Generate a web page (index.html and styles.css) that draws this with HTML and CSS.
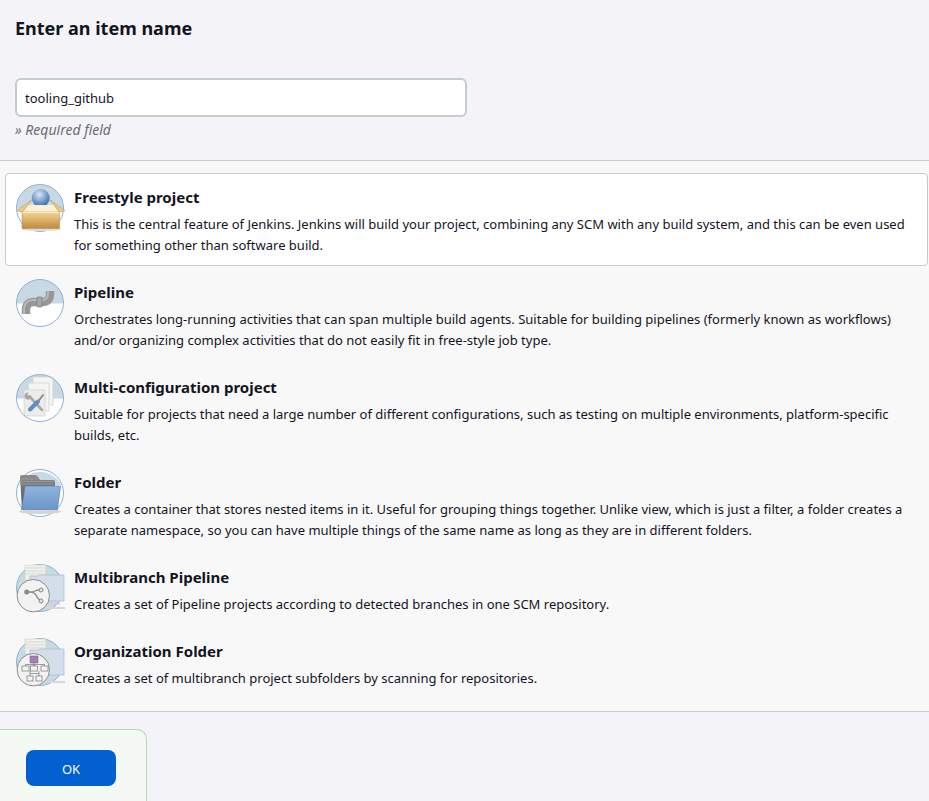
FILE: index.html
```
<!DOCTYPE html>
<html lang="en">
<head>
<meta charset="utf-8">
<title>New Item</title>
<link rel="stylesheet" href="styles.css">
</head>
<body>
<section class="name-section">
  <h2 class="section-title">Enter an item name</h2>
  <input class="name-input" type="text" value="tooling_github">
  <div class="hint">» Required field</div>
</section>
<ul class="item-list">
  <li class="item selected">
    <svg class="icon" viewBox="0 0 48 48">
      <defs>
        <clipPath id="c0"><circle cx="24" cy="24" r="23.5"/></clipPath>
        <radialGradient id="ball" cx=".42" cy=".3" r=".75"><stop offset="0" stop-color="#dbe7f4"/><stop offset=".5" stop-color="#7ea6d2"/><stop offset="1" stop-color="#2f5f9b"/></radialGradient>
        <linearGradient id="box" x1="0" y1="0" x2="0" y2="1"><stop offset="0" stop-color="#f3d596"/><stop offset="1" stop-color="#c08a3c"/></linearGradient>
      </defs>
      <circle cx="24" cy="24" r="23.5" fill="#fff"/>
      <rect width="48" height="24.5" fill="#c6d9e4" clip-path="url(#c0)"/>
      <circle class="ring" cx="24" cy="24" r="23.5"/>
      <ellipse cx="25" cy="45" rx="20" ry="2" fill="#dcdcdc"/>
      <path d="M9 21h32v8H9z" fill="#d3a662"/>
      <circle cx="24.700" cy="14" r="9" fill="url(#ball)"/>
      <path d="M10 21h30l4 7H6z" fill="#fbf0d4"/>
      <path d="M15.700 16 .6 26.700l5.700 1.500L12 21zM34 16l15 10.700-5.700 1.500L38 21z" fill="#ebc98a" stroke="#b98a42" stroke-width=".5"/>
      <path d="M6 28h37.500v16.500H6z" fill="url(#box)" stroke="#b98a42" stroke-width=".5"/>
      <path d="M6 28.500h37.500" stroke="#fbeccb" stroke-width="1"/>
    </svg>
    <div class="item-body">
      <div class="item-title">Freestyle project</div>
      <div class="item-desc">This is the central feature of Jenkins. Jenkins will build your project, combining any SCM with any build system, and this can be even used for something other than software build.</div>
    </div>
  </li>
  <li class="item">
    <svg class="icon" viewBox="0 0 48 48">
      <clipPath id="c1"><circle cx="24" cy="24" r="23.5"/></clipPath>
      <circle cx="24" cy="24" r="23.5" fill="#fff"/>
      <rect width="48" height="24.5" fill="#c6d9e4" clip-path="url(#c1)"/>
      <path d="M10 35v-4q0-8 8-8h8q8 0 8-8v-3" fill="none" stroke="#979797" stroke-width="8.500"/>
      <path d="M8 35v-4q0-10 10-10h8q6 0 6-7v-2" fill="none" stroke="#b8b8b8" stroke-width="2"/>
      <rect x="21" y="18" width="5" height="10" rx="1" fill="#a6a6a6" stroke="#6f6f6f" stroke-width=".6"/>
      <circle class="ring" cx="24" cy="24" r="23.5"/>
    </svg>
    <div class="item-body">
      <div class="item-title">Pipeline</div>
      <div class="item-desc">Orchestrates long-running activities that can span multiple build agents. Suitable for building pipelines (formerly known as workflows) and/or organizing complex activities that do not easily fit in free-style job type.</div>
    </div>
  </li>
  <li class="item">
    <svg class="icon" viewBox="0 0 48 48">
      <clipPath id="c2"><circle cx="24" cy="24" r="23.5"/></clipPath>
      <circle cx="24" cy="24" r="23.5" fill="#fff"/>
      <rect width="48" height="24.5" fill="#c6d9e4" clip-path="url(#c2)"/>
      <rect x="17" y="3" width="20" height="28" fill="#f4f4f0" stroke="#d2d2cc" stroke-width=".7"/>
      <rect x="12.500" y="9" width="20.500" height="28" fill="#f4f4f0" stroke="#d2d2cc" stroke-width=".7"/>
      <rect x="8" y="16" width="21" height="26" fill="#ececea" stroke="#d2d2cc" stroke-width=".7"/>
      <path d="M13.500 22.500 26 36" stroke="#a8a8a8" stroke-width="2.600" stroke-linecap="round"/>
      <path d="M12.500 18.500a3.600 3.600 0 1 0 3 3l-2 1-2-2z" fill="#a8a8a8"/>
      <path d="M22 27.500 14 35.500" stroke="#5c8cc2" stroke-width="4" stroke-linecap="round"/>
      <path d="M22 27.500l5.500-7" stroke="#8c8c8c" stroke-width="2"/>
      <circle class="ring" cx="24" cy="24" r="23.5"/>
    </svg>
    <div class="item-body">
      <div class="item-title">Multi-configuration project</div>
      <div class="item-desc">Suitable for projects that need a large number of different configurations, such as testing on multiple environments, platform-specific builds, etc.</div>
    </div>
  </li>
  <li class="item">
    <svg class="icon" viewBox="0 0 48 48">
      <defs>
        <linearGradient id="fold" x1="0" y1="0" x2="0" y2="1"><stop offset="0" stop-color="#92b5dd"/><stop offset="1" stop-color="#6a96c9"/></linearGradient>
        <linearGradient id="fback" x1="0" y1="0" x2="0" y2="1"><stop offset="0" stop-color="#8c8c8c"/><stop offset="1" stop-color="#4d4d4d"/></linearGradient>
      </defs>
      <circle cx="24" cy="24" r="23.5" fill="#fff"/>
      <path d="M3 16a23.500 23.500 0 0 1 42 0z" fill="#c6d9e4"/>
      <circle class="ring" cx="24" cy="24" r="23.500"/>
      <ellipse cx="24" cy="42.500" rx="21" ry="2.500" fill="#d4d4d4"/>
      <path d="M4 8q0-2 2-2h13q2 0 3 2l2 3h13q2 0 2 2v27H6z" fill="url(#fback)"/>
      <path d="M5 10h17M5 12.500h32M5 15h32" stroke="#a8a8a8" stroke-width=".6"/>
      <path d="M9 17h35.500l-3 23.500H5.500z" fill="url(#fold)" stroke="#4a78ad" stroke-width=".6"/>
    </svg>
    <div class="item-body">
      <div class="item-title">Folder</div>
      <div class="item-desc">Creates a container that stores nested items in it. Useful for grouping things together. Unlike view, which is just a filter, a folder creates a separate namespace, so you can have multiple things of the same name as long as they are in different folders.</div>
    </div>
  </li>
  <li class="item compact">
    <svg class="icon" viewBox="0 0 48 48">
      <circle class="disc-sky" cx="24" cy="24" r="23.500"/>
      <rect x="9" y="1" width="21" height="15" fill="#f0f0ec" stroke="#d0d0ca" stroke-width=".6"/>
      <path d="M9 4h21M9 7h21M9 10h21" stroke="#d2d2cc" stroke-width=".7"/>
      <path d="M14 12h8l2-1h24v26H14z" fill="#d3deea" stroke="#a9bccf" stroke-width=".7"/>
      <path d="M32 39h12v1.500H32z" fill="#cfcfcf"/>
      <path d="M32 43h17v2H32z" fill="#d8d8d8"/>
      <circle cx="17.300" cy="31.700" r="16.200" fill="#f2f2f2" stroke="#8d8d8d" stroke-width="1"/>
      <path d="M11 28h4c4 0 4 2 6 5l3 3.500M15 28c3 0 5-2 8-2" fill="none" stroke="#8a8a8a" stroke-width="1.300"/>
      <circle cx="10.700" cy="28" r="2.500" fill="#8a8a8a"/>
      <circle cx="25" cy="26" r="2" fill="#e0e0e0" stroke="#8a8a8a"/>
      <circle cx="25" cy="37" r="2" fill="#e0e0e0" stroke="#8a8a8a"/>
    </svg>
    <div class="item-body">
      <div class="item-title">Multibranch Pipeline</div>
      <div class="item-desc">Creates a set of Pipeline projects according to detected branches in one SCM repository.</div>
    </div>
  </li>
  <li class="item compact">
    <svg class="icon" viewBox="0 0 48 48">
      <circle class="disc-sky" cx="24" cy="24" r="23.500"/>
      <rect x="9" y="1" width="21" height="15" fill="#f0f0ec" stroke="#d0d0ca" stroke-width=".6"/>
      <path d="M9 4h21M9 7h21M9 10h21" stroke="#d2d2cc" stroke-width=".7"/>
      <path d="M14 12h8l2-1h24v26H14z" fill="#d3deea" stroke="#a9bccf" stroke-width=".7"/>
      <path d="M32 43h17v2H32z" fill="#d8d8d8"/>
      <circle cx="17.300" cy="31.700" r="16.200" fill="#f2f2f2" stroke="#8d8d8d" stroke-width="1"/>
      <rect x="14" y="18" width="8" height="7" fill="#a67fb2" stroke="#77557f" stroke-width=".5"/>
      <path d="M18 25v3M9.500 26.500h19M9.500 26.500V28M18 26.500V28M28.500 26.500V28M14 33v5M23 33v5M14 35.500h9" fill="none" stroke="#777" stroke-width=".7"/>
      <g class="org-box"><rect x="6" y="28" width="7" height="5"/><rect x="14.500" y="28" width="7" height="5"/><rect x="25" y="28" width="7" height="5"/><rect x="11" y="38" width="6" height="5"/><rect x="20" y="38" width="6" height="5"/></g>
    </svg>
    <div class="item-body">
      <div class="item-title">Organization Folder</div>
      <div class="item-desc">Creates a set of multibranch project subfolders by scanning for repositories.</div>
    </div>
  </li>
</ul>
<div class="footer">
  <div class="button-bar"><button class="ok-button" type="button">OK</button></div>
</div>
</body>
</html>
```
FILE: styles.css
```
* { box-sizing: border-box; }
html, body { height: 100%; }
body {
  margin: 0;
  height: 801px;
  overflow: hidden;
  background: #f3f3f8;
  color: #14141f;
  font-family: "Noto Sans", "Open Sans", sans-serif;
  font-size: 13px;
}
.name-section {
  height: 161px;
  padding: 17px 15px 0;
  border-bottom: 1px solid #c3ccd1;
}
.section-title {
  margin: 0;
  font-size: 18px;
  line-height: 23px;
  font-weight: 700;
}
.name-input {
  display: block;
  width: 452px;
  height: 39px;
  margin-top: 38px;
  padding: 0 8px;
  border: 2px solid #c3ccd1;
  border-radius: 6px;
  background: #fff;
  color: #14141f;
  font: 13px "Noto Sans", sans-serif;
}
.hint {
  margin-top: 4px;
  font-size: 14px;
  line-height: 18px;
  font-style: italic;
  color: #6d6b75;
}
.item-list {
  list-style: none;
  margin: 0;
  height: 551px;
  padding: 12px 1px 0 5px;
  background: #f8f8f8;
  border-bottom: 1px solid #c3ccd1;
}
.item {
  display: flex;
  gap: 10px;
  height: 95px;
  padding: 10px 10px 0;
  border: 1px solid transparent;
}
.item.selected {
  height: 93px;
  margin-bottom: 2px;
  background: #fff;
  border-color: #c3ccd1;
  border-radius: 4px;
}
.item.compact { height: 74px; }
.icon {
  flex: none;
  width: 48px;
  height: 48px;
  overflow: visible;
}
.disc-sky { fill: #c6d9e4; stroke: #8fb2d6; stroke-width: 1; }
.ring { fill: none; stroke: #8fb2d6; stroke-width: 1; }
.org-box rect { fill: #f3f3f3; stroke: #777; stroke-width: .7; }
.item-title {
  font-size: 15px;
  font-weight: 700;
  line-height: 26px;
}
.item-desc {
  margin-top: 4px;
  line-height: 21px;
}
.footer { height: 89px; padding-top: 17px; }
.button-bar {
  width: 147px;
  height: 72px;
  padding: 20px 0 0 26px;
  background: #f5f9f3;
  border: 1px solid #b5d4bb;
  border-left: 0;
  border-bottom: 0;
  border-top-right-radius: 10px;
}
.ok-button {
  width: 90px;
  height: 36px;
  padding: 2px 0 0;
  border: 0;
  border-radius: 8px;
  background: #0260d0;
  color: #fff;
  font: 13px "Noto Sans", sans-serif;
}
```
